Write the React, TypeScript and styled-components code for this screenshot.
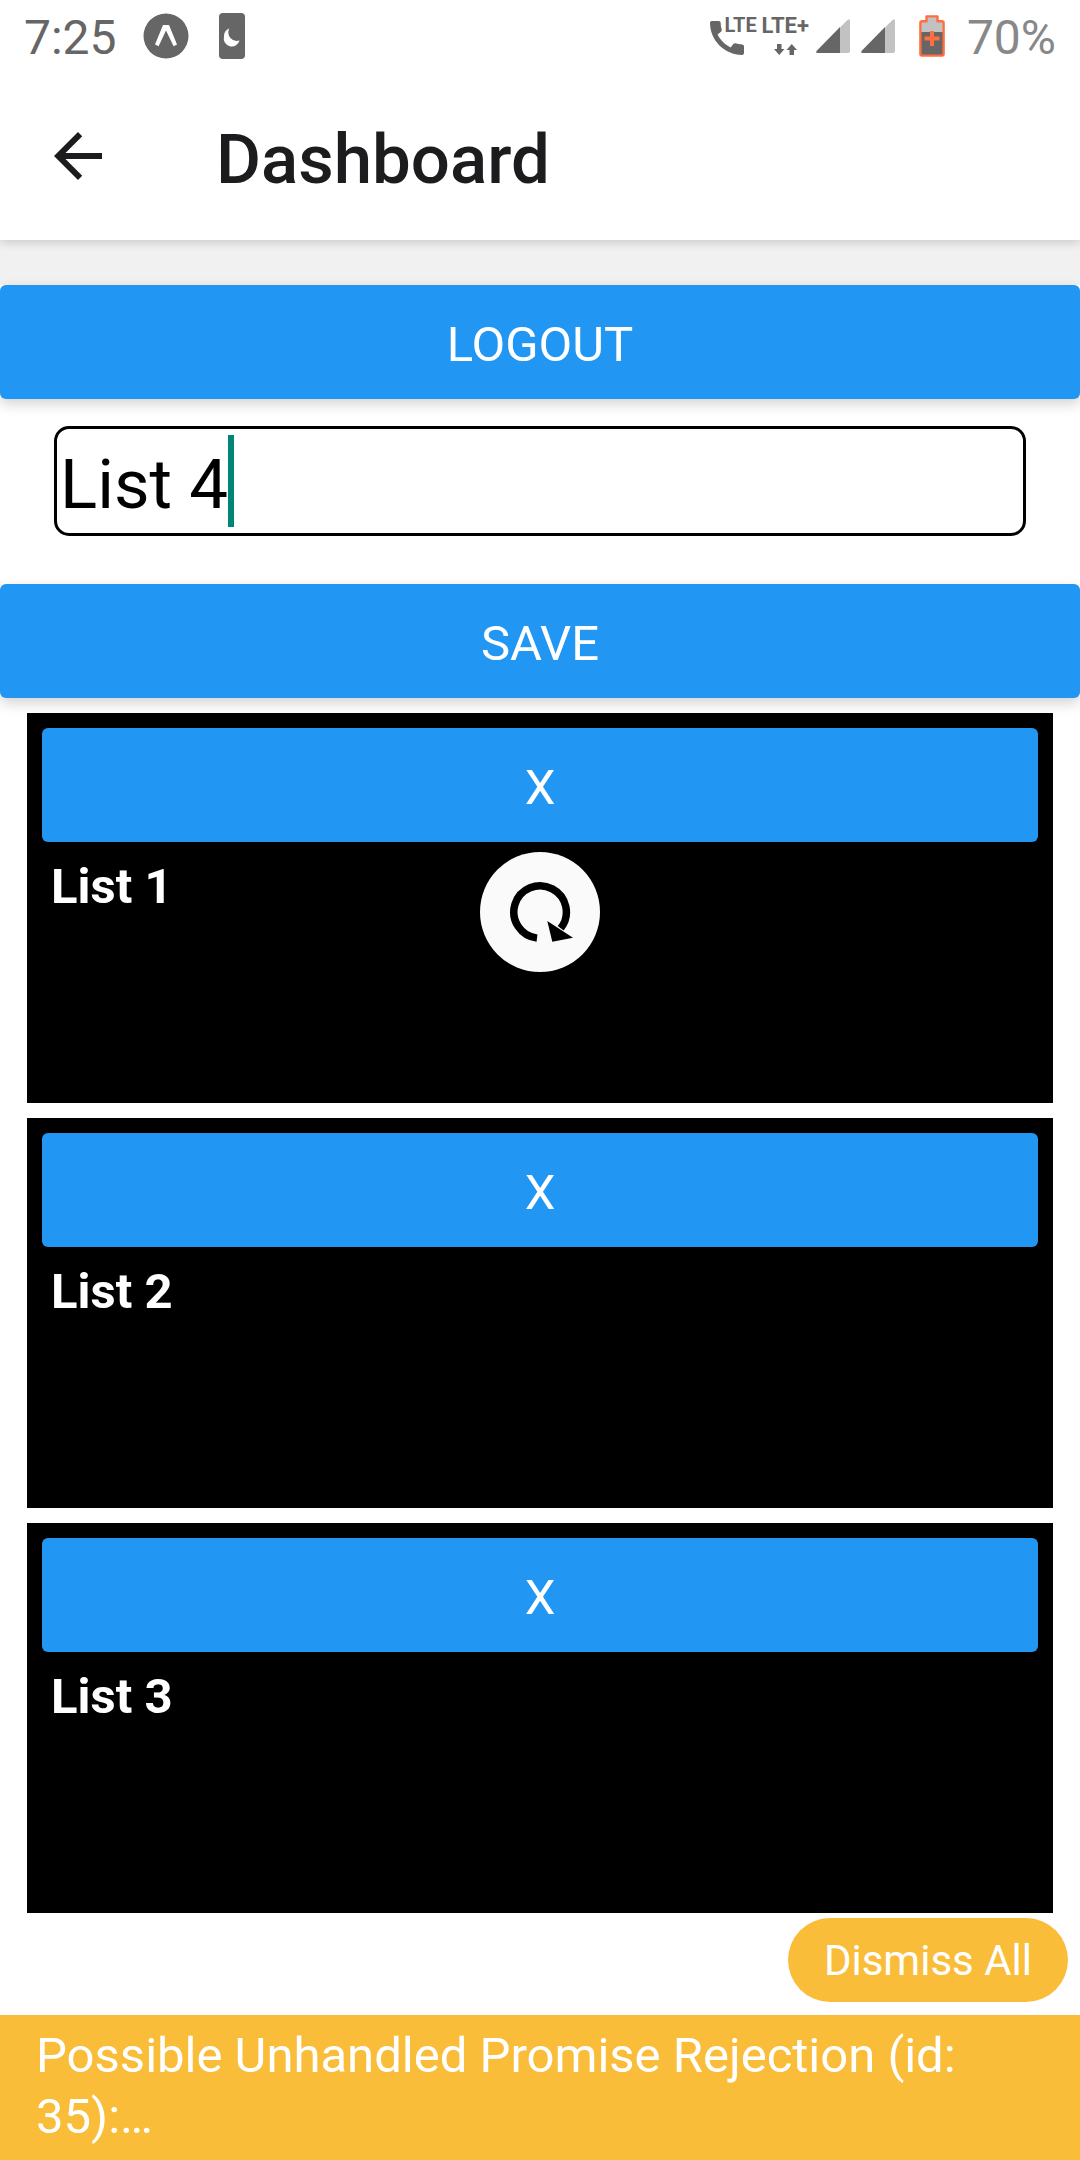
import React, { useState } from "react";
import styled, { createGlobalStyle } from "styled-components";

const GlobalStyle = createGlobalStyle`
  *, *::before, *::after { box-sizing: border-box; }
  body {
    margin: 0;
    background: #fff;
    font-family: Roboto, "Liberation Sans", sans-serif;
  }
  button, input { font-family: inherit; }
`;

const Screen = styled.div`
  display: flex;
  flex-direction: column;
  min-height: 100vh;
`;

const StatusBar = styled.div`
  display: flex;
  align-items: center;
  justify-content: space-between;
  height: 72px;
  padding: 0 24px;
  background: #fff;
  color: #666;
  z-index: 2;
`;

const StatusGroup = styled.div<{ $gap: number }>`
  display: flex;
  align-items: center;
  gap: ${(p) => p.$gap}px;
`;

const StatusText = styled.span<{ $muted?: boolean }>`
  font-size: 48px;
  line-height: 56px;
  padding-top: 3px;
  color: ${(p) => (p.$muted ? "#888" : "#666")};
`;

const StatusIcon = styled.svg`
  display: block;
  flex: none;
`;

const CallStatus = styled.div`
  position: relative;
  width: 49px;
  height: 42px;
  padding-top: 6px;
`;

const NetworkLabel = styled.span<{ $size: number }>`
  font-size: ${(p) => p.$size}px;
  line-height: 24px;
  font-weight: 700;
`;

const CallBadge = styled(NetworkLabel)`
  position: absolute;
  top: -2px;
  left: 14px;
`;

const DataStatus = styled.div`
  display: flex;
  flex-direction: column;
  align-items: center;
  gap: 6px;
  padding-bottom: 4px;
`;

const Header = styled.header`
  display: flex;
  align-items: center;
  gap: 102px;
  height: 168px;
  padding: 0 42px;
  background: #fff;
  box-shadow: 0 2px 10px rgba(0, 0, 0, 0.18);
  z-index: 1;
`;

const BackButton = styled.button`
  display: flex;
  padding: 0;
  border: 0;
  background: none;
  color: #1c1c1e;
`;

const Title = styled.h1`
  margin: 0;
  padding-top: 8px;
  font-size: 69px;
  line-height: 80px;
  font-weight: 500;
  color: #1c1c1e;
`;

const Band = styled.div`
  height: 45px;
  background: #f1f1f1;
`;

const Button = styled.button`
  display: block;
  width: 100%;
  height: 114px;
  padding: 5px 24px 0;
  border: 0;
  border-radius: 6px;
  background: #2196f3;
  color: #fff;
  font-size: 49px;
  line-height: 56px;
  text-transform: uppercase;
  box-shadow: 0 5px 14px rgba(0, 0, 0, 0.18);
`;

const Field = styled.label`
  display: flex;
  align-items: center;
  height: 110px;
  margin: 27px 54px 48px;
  padding: 0 3px;
  border: 3px solid #000;
  border-radius: 15px;
  background: #fff;
`;

const FieldInput = styled.input`
  field-sizing: content;
  max-width: 100%;
  height: 92px;
  padding: 6px 0 0;
  border: 0;
  outline: 0;
  background: none;
  color: #000;
  caret-color: transparent;
  font-size: 69px;
  line-height: 80px;
`;

const Caret = styled.span`
  flex: none;
  width: 6px;
  height: 92px;
  background: #008577;
`;

const ListArea = styled.main`
  position: relative;
`;

const Lists = styled.ul`
  display: grid;
  gap: 15px;
  margin: 0;
  padding: 15px 27px 5px;
  list-style: none;
`;

const Card = styled.li`
  min-height: 390px;
  padding: 15px;
  background: #000;
`;

const CardTitle = styled.h2`
  margin: 0;
  padding: 17px 9px;
  color: #fff;
  font-size: 49px;
  line-height: 56px;
  font-weight: 700;
`;

const Refresh = styled.div`
  position: absolute;
  top: 154px;
  left: calc(50% - 60px);
  width: 120px;
  height: 120px;
  border-radius: 50%;
  background: #fafafa;
`;

const LogBox = styled.aside`
  display: flex;
  flex-direction: column;
  align-items: flex-end;
  gap: 13px;
  margin-top: auto;
`;

const Dismiss = styled.button`
  height: 84px;
  margin-right: 12px;
  padding: 1px 36px 0;
  border: 0;
  border-radius: 42px;
  background: #fabd3a;
  color: #fff;
  font-size: 42px;
  line-height: 48px;
`;

const Warning = styled.p`
  width: 100%;
  margin: 0;
  padding: 10px 36px 13px;
  background: #fabd3a;
  color: #fff;
  font-size: 49px;
  line-height: 61px;
`;

const ExpoIcon = () => (
  <StatusIcon width="46" height="46" viewBox="0 0 46 46" aria-hidden="true">
    <circle cx="23" cy="23" r="22.5" fill="#666" />
    <path d="M12 31.500 20 12h6L34 31.500 30.600 33.200 23 17.500 15.600 33.200z" fill="#fff" />
  </StatusIcon>
);

const NightPhoneIcon = () => (
  <StatusIcon width="26" height="46" viewBox="0 0 26 46" aria-hidden="true">
    <rect width="26" height="46" rx="4" fill="#666" />
    <path
      d="M10.300 15.600A8.300 8.300 0 0 0 5 23.500 8 8 0 0 0 20.500 27.500 8.500 8.500 0 0 1 10.300 15.600z"
      fill="#fff"
    />
  </StatusIcon>
);

const PhoneIcon = () => (
  <StatusIcon width="34" height="34" viewBox="3 3 18 18" aria-hidden="true">
    <path
      fill="#666"
      d="M20.010 15.380c-1.230 0-2.420-.2-3.530-.56-.35-.12-.74-.03-1.010.24l-1.570 1.970c-2.830-1.350-5.480-3.900-6.890-6.830l1.950-1.660c.27-.28.35-.67.24-1.020-.37-1.110-.56-2.300-.56-3.530 0-.54-.45-.99-.99-.99H4.190C3.650 3 3 3.240 3 3.990 3 13.280 10.730 21 20.010 21c.71 0 .99-.63.99-1.180v-3.450c0-.54-.45-.99-.99-.99z"
    />
  </StatusIcon>
);

const DataArrows = () => (
  <StatusIcon width="23" height="11" viewBox="0 0 23 11" aria-hidden="true">
    <path fill="#666" d="M3 0h4.500v5h3L5.250 11 0 5h3zM15.500 11H20V6h3L17.750 0 12.500 6h3z" />
  </StatusIcon>
);

const SignalIcon = () => (
  <StatusIcon width="34" height="34" viewBox="0 0 34 34" aria-hidden="true">
    <path fill="#c2c2c2" d="M24 8.500 31.500 1Q34 -1 34 2V32Q34 34 32 34H24z" />
    <path fill="#666" d="M24 8v26H1.500Q-1 34 1 31.500z" />
  </StatusIcon>
);

const BatteryIcon = () => (
  <StatusIcon width="26" height="42" viewBox="0 0 26 42" aria-hidden="true">
    <path fill="#c2c2c2" d="M2 7q0-1 1-1h5V1.500h10V6h5q1 0 1 1v11H2z" />
    <path fill="#666" d="M2 17h22v23H2z" />
    <path
      fill="none"
      stroke="#ff6e40"
      strokeWidth="2.400"
      strokeLinejoin="round"
      d="M3 6.200h4.500V1.400h11v4.800H23q1.600 0 1.600 1.600v31.200q0 1.600-1.600 1.600H3q-1.600 0-1.600-1.600V7.800Q1.400 6.200 3 6.200z"
    />
    <path stroke="#ff6e40" strokeWidth="4" d="M13 16v15M5.500 23.500h15" />
  </StatusIcon>
);

const BackIcon = () => (
  <svg width="72" height="72" viewBox="0 0 24 24" aria-hidden="true">
    <path fill="currentColor" d="M20 11H7.830l5.590-5.590L12 4l-8 8 8 8 1.410-1.410L7.830 13H20z" />
  </svg>
);

const RefreshIcon = () => (
  <svg width="120" height="120" viewBox="0 0 120 120" aria-hidden="true">
    <path d="M57 86.100A26.250 26.250 0 1 1 80.700 76.300" fill="none" stroke="#000" strokeWidth="7.500" />
    <path d="M67.300 69 93 85.700 72.300 89.700z" />
  </svg>
);

const lists = ["List 1", "List 2", "List 3"];

export default function App() {
  const [name, setName] = useState("List 4");

  return (
    <Screen>
      <GlobalStyle />
      <StatusBar>
        <StatusGroup $gap={26}>
          <StatusText>7:25</StatusText>
          <StatusGroup $gap={30}>
            <ExpoIcon />
            <NightPhoneIcon />
          </StatusGroup>
        </StatusGroup>
        <StatusGroup $gap={22}>
          <StatusGroup $gap={24}>
            <StatusGroup $gap={7}>
              <StatusGroup $gap={2}>
                <CallStatus>
                  <PhoneIcon />
                  <CallBadge $size={20}>LTE</CallBadge>
                </CallStatus>
                <DataStatus>
                  <NetworkLabel $size={22}>LTE+</NetworkLabel>
                  <DataArrows />
                </DataStatus>
              </StatusGroup>
              <StatusGroup $gap={11}>
                <SignalIcon />
                <SignalIcon />
              </StatusGroup>
            </StatusGroup>
            <BatteryIcon />
          </StatusGroup>
          <StatusText $muted>70%</StatusText>
        </StatusGroup>
      </StatusBar>
      <Header>
        <BackButton type="button" aria-label="Back">
          <BackIcon />
        </BackButton>
        <Title>Dashboard</Title>
      </Header>
      <Band />
      <Button type="button">Logout</Button>
      <Field>
        <FieldInput aria-label="List name" value={name} onChange={(e) => setName(e.target.value)} />
        <Caret />
      </Field>
      <Button type="button">Save</Button>
      <ListArea>
        <Lists>
          {lists.map((list) => (
            <Card key={list}>
              <Button type="button" aria-label={`Delete ${list}`}>
                X
              </Button>
              <CardTitle>{list}</CardTitle>
            </Card>
          ))}
        </Lists>
        <Refresh role="status" aria-label="Refreshing">
          <RefreshIcon />
        </Refresh>
      </ListArea>
      <LogBox>
        <Dismiss type="button">Dismiss All</Dismiss>
        <Warning>Possible Unhandled Promise Rejection (id: 35):…</Warning>
      </LogBox>
    </Screen>
  );
}
